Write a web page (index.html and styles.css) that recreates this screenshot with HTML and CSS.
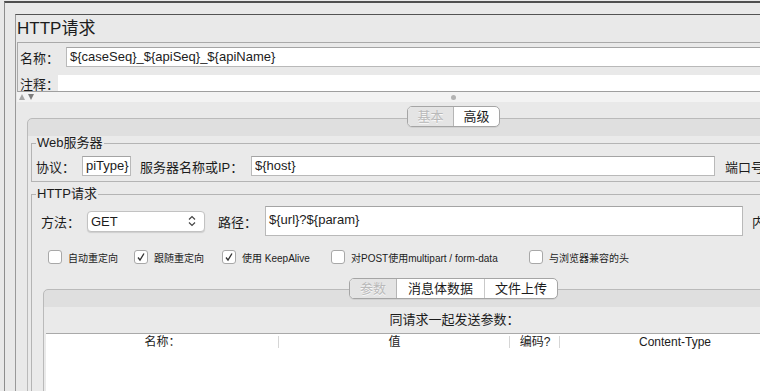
FILE: index.html
```html
<!DOCTYPE html>
<html lang="zh-CN">
<head>
<meta charset="UTF-8">
<title>HTTP请求</title>
<link rel="stylesheet" href="styles.css">
</head>
<body>
<div class="window">
  <div class="editor">
    <h1 class="title">HTTP请求</h1>

    <div class="name-box">
      <div class="row name-row">
        <span class="lbl">名称：</span>
        <div class="field grow">${caseSeq}_${apiSeq}_${apiName}</div>
      </div>
      <div class="row comment-row">
        <span class="lbl">注释：</span>
        <div class="comment-field"></div>
      </div>
    </div>

    <div class="splitter">
      <svg class="arrows" width="16" height="6" viewBox="0 0 16 6"><path d="M0 6 L3 0 L6 6 Z" fill="#a6a6a6"/><path d="M9 0 L15 0 L12 6 Z" fill="#7d7d7d"/></svg>
      <span class="knob"></span>
      <span></span>
    </div>

    <div class="lower">
      <div class="tab-head">
        <div class="seg">
          <span class="seg-item off w45">基本</span>
          <span class="seg-item on w45">高级</span>
        </div>
      </div>
      <div class="tab-pane">
        <fieldset class="group">
          <legend>Web服务器</legend>
          <div class="row field-row">
            <span class="lbl w46">协议：</span>
            <div class="field proto">piType}</div>
            <span class="lbl host-lbl">服务器名称或IP：</span>
            <div class="field host">${host}</div>
            <span class="lbl port-lbl">端口号：</span>
          </div>
        </fieldset>

        <fieldset class="group http-group">
          <legend>HTTP请求</legend>
          <div class="http-body">
            <div class="row method-row">
              <span class="lbl w46">方法：</span>
              <div class="combo">
                <span>GET</span>
                <svg width="8" height="12" viewBox="0 0 8 12"><path d="M1 4.5 L4 1.5 L7 4.5 M1 7.5 L4 10.5 L7 7.5" fill="none" stroke="#444" stroke-width="1.2"/></svg>
              </div>
              <span class="lbl path-lbl">路径：</span>
              <div class="field path">${url}?${param}</div>
              <span class="lbl enc-lbl">内容编码：</span>
            </div>

            <div class="checks">
              <div class="cb w86"><span class="box"></span>自动重定向</div>
              <div class="cb w88"><span class="box"><svg width="12" height="12" viewBox="0 0 12 12"><path d="M3 6.5 L5 9 L9 2.5" fill="none" stroke="#333" stroke-width="1.3"/></svg></span>跟随重定向</div>
              <div class="cb w109"><span class="box"><svg width="12" height="12" viewBox="0 0 12 12"><path d="M3 6.5 L5 9 L9 2.5" fill="none" stroke="#333" stroke-width="1.3"/></svg></span>使用 KeepAlive</div>
              <div class="cb w198"><span class="box"></span>对POST使用multipart / form-data</div>
              <div class="cb"><span class="box"></span>与浏览器兼容的头</div>
            </div>

            <div class="subtabs">
              <div class="tab-head">
                <div class="seg">
                  <span class="seg-item off w46">参数</span>
                  <span class="seg-item on w87">消息体数据</span>
                  <span class="seg-item on w72">文件上传</span>
                </div>
              </div>
              <div class="sub-pane">
                <div class="caption">同请求一起发送参数：</div>
                <div class="table">
                  <div class="thead">
                    <span class="th">名称：</span>
                    <span class="th">值</span>
                    <span class="th">编码?</span>
                    <span class="th last">Content-Type</span>
                  </div>
                </div>
              </div>
            </div>
          </div>
        </fieldset>
      </div>
    </div>
  </div>
</div>
</body>
</html>
```

FILE: styles.css
```css
body {
    margin: 0;
    background: #e9e9e9;
    color: #1c1c1c;
    font-family: "Liberation Sans", "Noto Sans CJK SC", sans-serif;
    font-size: 13px;
    overflow: hidden;
    height: 391px;
}
.window {
    margin: 1px 0 0 4px;
    border-top: 2px solid #4f4f4f;
    border-left: 1px solid #8e8e8e;
    padding: 11px 0 0 10px;
    height: 400px;
}
.editor {
    width: 873px;
    height: 400px;
    border-top: 1px solid #545454;
    border-left: 1px solid #9a9a9a;
    padding-left: 1px;
}
.title {
    margin: 0;
    height: 27px;
    line-height: 27px;
    font-size: 17px;
    font-weight: normal;
}
.row {
    display: flex;
    align-items: center;
    white-space: nowrap;
}
.lbl {
    flex: none;
}
.field {
    flex: none;
    box-sizing: border-box;
    height: 20px;
    line-height: 18px;
    padding: 0 3px;
    background: #fff;
    border: 1px solid #b9b9b9;
    border-top-color: #a4a4a4;
    white-space: nowrap;
    overflow: hidden;
}
.grow {
    flex: 1;
}

/* name / comment */
.name-box {
    border-top: 1px solid #a9a9a9;
    border-left: 1px solid #a9a9a9;
    border-bottom: 1px solid #9f9f9f;
    padding: 4px 0 0 2px;
}
.name-row {
    height: 20px;
}
.name-row .lbl {
    width: 46px;
}
.comment-row {
    height: 16px;
    margin-top: 8px;
}
.comment-row .lbl {
    width: 38px;
}
.comment-field {
    flex: 1;
    height: 16px;
    background: #fff;
}

/* split pane divider */
.splitter {
    height: 10px;
    background: #f3f3f3;
    display: grid;
    grid-template-columns: 1fr auto 1fr;
    align-items: center;
}
.arrows {
    margin-left: 2px;
}
.knob {
    width: 5px;
    height: 5px;
    border-radius: 50%;
    background: #b3b3b3;
}

/* tabbed panes */
.lower {
    padding: 4px 10px 0 10px;
}
.tab-head {
    display: flex;
    justify-content: center;
    height: 21px;
    position: relative;
    z-index: 1;
}
.seg {
    display: flex;
    box-sizing: border-box;
    height: 21px;
    border: 1px solid #a5a5a5;
    border-radius: 5px;
    overflow: hidden;
    background: #fff;
    box-shadow: 0 1px 0 rgba(0, 0, 0, 0.06);
}
.seg-item {
    text-align: center;
    line-height: 19px;
    font-size: 13px;
}
.seg-item + .seg-item {
    border-left: 1px solid #c9c9c9;
}
.seg-item.off {
    background: #e4e4e4;
    color: #b9b9b9;
    text-shadow: 0 1px 0 #fafafa;
}
.seg-item.off + .seg-item {
    border-left-color: #b5b5b5;
}
.w45 { width: 45px; }
.w46 { width: 46px; }
.w72 { width: 72px; }
.w86 { width: 86px; }
.w87 { width: 87px; }
.w88 { width: 88px; }
.w109 { width: 109px; }
.w198 { width: 198px; }

.tab-pane {
    margin-top: -9px;
    height: 400px;
    border: 1px solid #bababa;
    border-radius: 5px 5px 0 0;
    background: linear-gradient(#dfdfdf 0 17px, #eaeaea 17px);
    padding: 16px 3px 0 3px;
}

/* titled groups */
.group {
    margin: 0;
    min-width: 0;
    border: 1px solid #b4b4b4;
    padding: 5px 4px 5px 4px;
}
.group legend {
    padding: 0 1px;
    line-height: 16px;
    font-size: 13px;
}
.field-row {
    height: 20px;
}
.proto {
    width: 49px;
    text-align: right;
}
.host-lbl {
    margin-left: 9px;
    width: 111px;
}
.host {
    width: 464px;
}
.port-lbl {
    margin-left: 10px;
}

.http-group {
    margin-top: 4px;
    padding: 4px 4px 0 4px;
    height: 300px;
}
.http-body {
    padding-left: 5px;
}
.method-row {
    height: 30px;
}
.combo {
    flex: none;
    box-sizing: border-box;
    width: 118px;
    height: 21px;
    display: flex;
    align-items: center;
    justify-content: space-between;
    padding: 0 8px 0 3px;
    background: #fff;
    border: 1px solid #c2c2c2;
    border-radius: 4px;
    box-shadow: 0 1px 1px rgba(0, 0, 0, 0.12);
}
.path-lbl {
    margin-left: 13px;
    width: 47px;
}
.path {
    width: 478px;
    height: 30px;
    line-height: 26px;
    padding-bottom: 2px;
}
.enc-lbl {
    margin-left: 9px;
}

/* checkboxes */
.checks {
    display: flex;
    align-items: center;
    height: 20px;
    margin-top: 11px;
    padding-left: 7px;
    white-space: nowrap;
    font-size: 10px;
}
.cb {
    flex: none;
    display: flex;
    align-items: center;
    gap: 6px;
}
.box {
    box-sizing: border-box;
    width: 14px;
    height: 14px;
    border: 1px solid #a8a8a8;
    border-radius: 3px;
    background: #fff;
    display: flex;
    align-items: center;
    justify-content: center;
}

/* parameters sub tabs */
.subtabs {
    margin: 11px 0 0 2px;
    width: 821px;
}
.sub-pane {
    margin-top: -10px;
    height: 200px;
    border: 1px solid #bababa;
    border-radius: 5px 5px 0 0;
    background: linear-gradient(#dfdfdf 0 17px, #eaeaea 17px);
    padding: 17px 0 0 2px;
}
.caption {
    height: 26px;
    line-height: 26px;
    text-align: center;
}
.table {
    height: 120px;
    background: #fff;
    border-top: 1px solid #a9a9a9;
}
.thead {
    display: grid;
    grid-template-columns: 233px 231px 50px 230px 1fr;
    height: 16px;
}
.th {
    text-align: center;
    line-height: 16px;
    font-size: 12px;
    background: linear-gradient(#d6d6d6, #d6d6d6) right 2px / 1px 12px no-repeat;
}
.th.last {
    background: none;
}
```
